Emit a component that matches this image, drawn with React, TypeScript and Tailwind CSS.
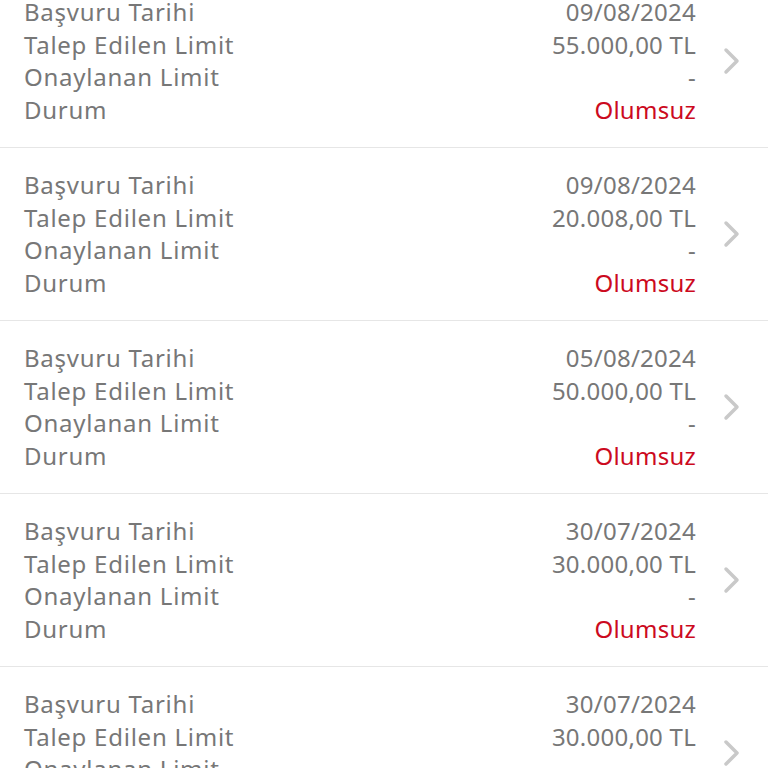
const rows = [
  { date: "09/08/2024", amount: "55.000,00 TL" },
  { date: "09/08/2024", amount: "20.008,00 TL" },
  { date: "05/08/2024", amount: "50.000,00 TL" },
  { date: "30/07/2024", amount: "30.000,00 TL" },
  { date: "30/07/2024", amount: "30.000,00 TL" },
];

const labels = ["Başvuru Tarihi", "Talep Edilen Limit", "Onaylanan Limit", "Durum"];

function Chevron() {
  return (
    <svg width="20" height="28" viewBox="0 0 20 28" fill="none" className="shrink-0">
      <path d="M4 3 L15 14 L4 25" stroke="#c9c9c9" strokeWidth="3.5" strokeLinecap="round" strokeLinejoin="round" />
    </svg>
  );
}

export default function App() {
  return (
    <div
      className="h-[768px] overflow-hidden bg-white"
      style={{ fontFamily: '"Noto Sans", "Open Sans", sans-serif' }}
    >
      <div className="-mt-[25px]">
        {rows.map((r, i) => (
          <div key={i} className="flex items-center border-b border-[#e6e6e6] pl-6 pr-[26px] py-[21px]">
            <div className="flex-1 text-[24px] leading-[32.5px] tracking-[0.75px] text-[#777777]">
              {labels.map(l => (
                <div key={l}>{l}</div>
              ))}
            </div>
            <div className="text-right text-[24px] leading-[32.5px] tracking-[0.25px] text-[#777777]">
              <div>{r.date}</div>
              <div>{r.amount}</div>
              <div>-</div>
              <div className="text-[#cc0a1e]">Olumsuz</div>
            </div>
            <div className="ml-[26px]">
              <Chevron />
            </div>
          </div>
        ))}
      </div>
    </div>
  );
}
